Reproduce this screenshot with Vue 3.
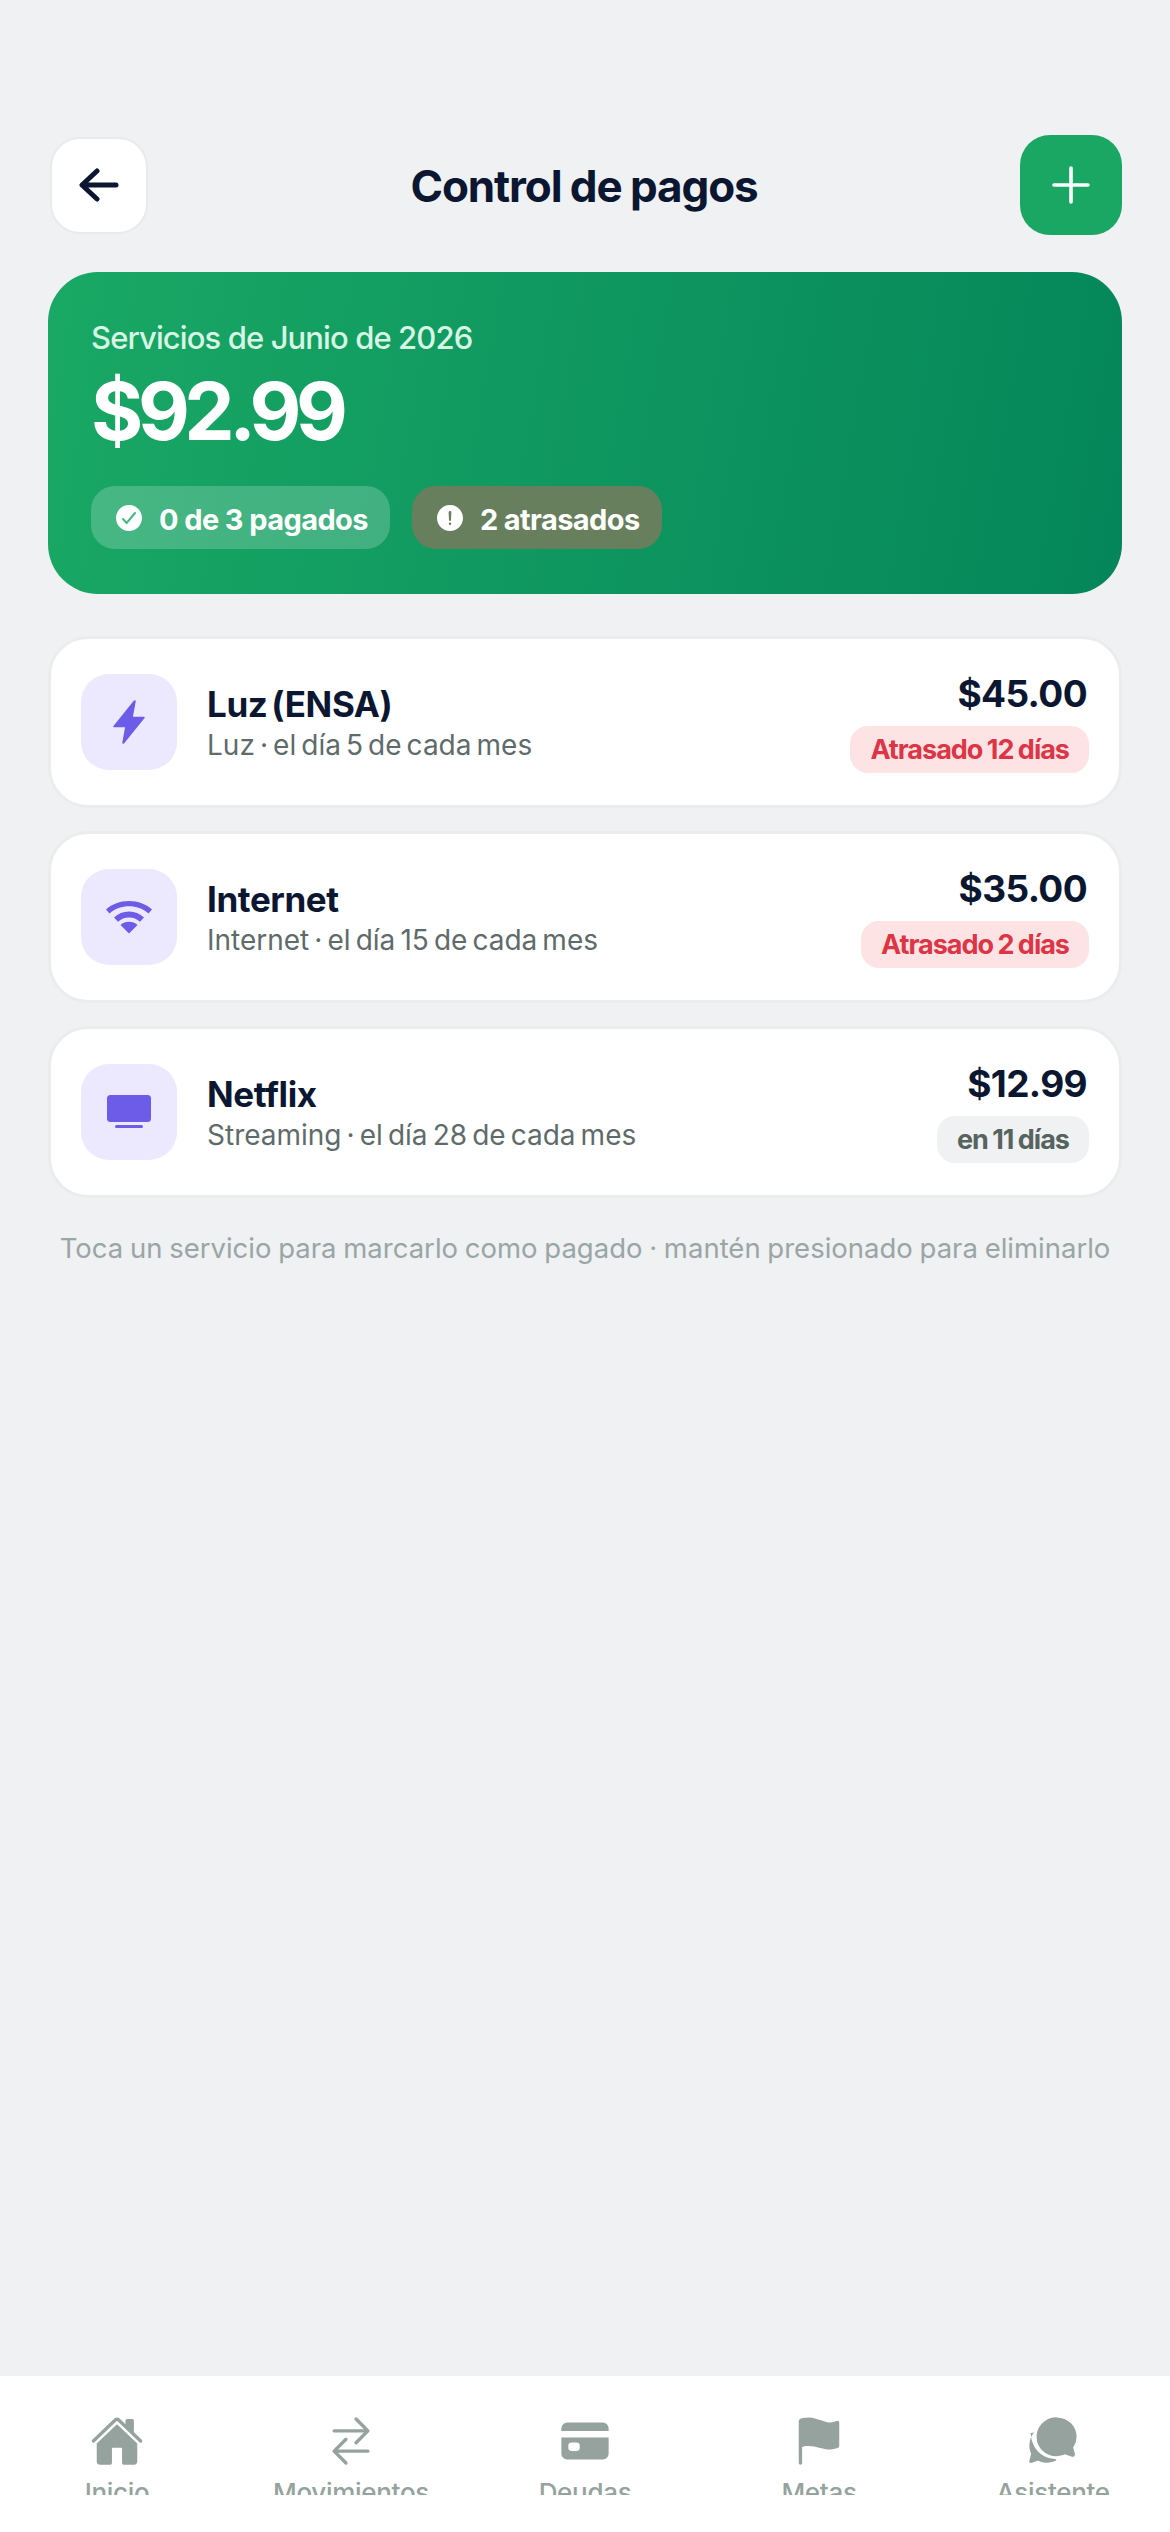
<template>
  <div class="page">
    <header class="top">
      <button class="back" type="button" aria-label="Volver">
        <svg width="40" height="34" viewBox="0 0 40 34" fill="none" stroke="#0b1730" stroke-width="5" stroke-linecap="round" stroke-linejoin="round"><path d="M18 3 3 17l15 14M4 17h33" /></svg>
      </button>
      <h1>Control de pagos</h1>
      <button class="add" type="button" aria-label="Agregar">
        <svg width="38" height="38" viewBox="0 0 38 38" fill="none" stroke="#fff" stroke-width="3.6" stroke-linecap="round"><path d="M19 2v34M2 19h34" /></svg>
      </button>
    </header>

    <section class="summary">
      <div class="summary-label">Servicios de Junio de 2026</div>
      <div class="summary-total">$92.99</div>
      <div class="chips">
        <div class="chip">
          <svg width="32" height="32" viewBox="0 0 512 512" fill="#fff"><path d="M256 48C141.31 48 48 141.31 48 256s93.31 208 208 208 208-93.31 208-208S370.69 48 256 48zm108.25 138.29l-134.4 160a16 16 0 01-12 5.71h-.27a16 16 0 01-11.89-5.3l-57.6-64a16 16 0 1123.78-21.4l45.29 50.32 122.59-145.91a16 16 0 0124.5 20.58z" /></svg>
          <span>0 de 3 pagados</span>
        </div>
        <div class="chip late">
          <svg width="32" height="32" viewBox="0 0 512 512" fill="#fff"><path d="M256 48C141.31 48 48 141.31 48 256s93.31 208 208 208 208-93.31 208-208S370.69 48 256 48zm0 319.91a20 20 0 1120-20 20 20 0 01-20 20zm21.72-201.15l-5.74 122a16 16 0 01-32 0l-5.74-121.94v-.05a21.74 21.74 0 1143.44 0z" /></svg>
          <span>2 atrasados</span>
        </div>
      </div>
    </section>

    <ul class="services">
      <li v-for="s in services" :key="s.name" class="service">
        <div class="service-icon">
          <svg v-if="s.icon === 'flash'" width="48" height="48" viewBox="0 0 512 512" fill="#6c5ce7"><path d="M315.27 33L96 304h128l-31.51 173.23a2.36 2.36 0 002.33 2.77 2.36 2.36 0 001.89-.95L416 208H288l31.66-173.25A2.45 2.45 0 00317.22 32a2.42 2.42 0 00-1.95 1z" stroke="#6c5ce7" stroke-width="16" stroke-linejoin="round" /></svg>
          <svg v-else-if="s.icon === 'wifi'" width="48" height="36" viewBox="0 0 48 36" fill="#6c5ce7"><path d="M1 10.5C7 5 15 2 24 2s17 3 23 8.500l-3.500 4C38 9.500 31 7.200 24 7.200S10 9.500 4.500 14.500z" /><path d="M9 18.500c4-3.800 9.200-6 15-6s11 2.200 15 6l-4 4.300c-3-2.800-6.800-4.300-11-4.300s-8 1.500-11 4.300z" /><path d="M15.500 26c2.300-2 5.200-3.200 8.500-3.200s6.200 1.200 8.500 3.200L24 34.500z" /></svg>
          <svg v-else width="46" height="36" viewBox="0 0 46 36" fill="#6c5ce7"><rect x="1" y="1" width="44" height="27" rx="3.500" /><rect x="9" y="31" width="28" height="3" rx="1.500" /></svg>
        </div>
        <div class="service-info">
          <div class="service-name">{{ s.name }}</div>
          <div class="service-sub">{{ s.sub }}</div>
        </div>
        <div class="service-side">
          <div class="service-amount">{{ s.amount }}</div>
          <div class="status" :class="{ overdue: s.overdue }">{{ s.status }}</div>
        </div>
      </li>
    </ul>

    <p class="hint">Toca un servicio para marcarlo como pagado · mantén presionado para eliminarlo</p>

    <div class="spacer"></div>

    <nav class="tabs">
      <div v-for="t in tabs" :key="t.label" class="tab">
        <svg v-if="t.icon === 'home'" width="54" height="54" viewBox="0 0 512 512" fill="#95a29d"><path d="M261.56 101.28a8 8 0 00-11.06 0L66.4 277.15a8 8 0 00-2.47 5.79L63.9 448a32 32 0 0032 32H192a16 16 0 0016-16V328a8 8 0 018-8h80a8 8 0 018 8v136a16 16 0 0016 16h96.06a32 32 0 0032-32V282.94a8 8 0 00-2.470-5.790z" /><path d="M490.91 244.15l-74.8-71.56V64a16 16 0 00-16-16h-48a16 16 0 00-16 16v32l-57.92-55.38C272.77 35.14 264.71 32 256 32c-8.680 0-16.720 3.140-22.140 8.630l-212.700 203.500c-6.220 6-7 15.870-1.340 22.370A16 16 0 0043 267.560L250.500 69.280a8 8 0 0111.060 0l207.520 198.280a16 16 0 0022.590-.440c6.140-6.360 5.630-16.860-.760-22.970z" /></svg>
        <svg v-else-if="t.icon === 'swap'" width="54" height="54" viewBox="0 0 512 512" fill="none" stroke="#95a29d" stroke-width="32" stroke-linecap="round" stroke-linejoin="round"><path d="M304 48l112 112-112 112M398.870 160H96M208 464L96 352l112-112M114 352h302" /></svg>
        <svg v-else-if="t.icon === 'card'" width="54" height="54" viewBox="0 0 512 512" fill="#95a29d"><path d="M32 376a56 56 0 0056 56h336a56 56 0 0056-56V222H32zm66-76a30 30 0 0130-30h48a30 30 0 0130 30v20a30 30 0 01-30 30h-48a30 30 0 01-30-30zM424 80H88a56 56 0 00-56 56v26h448v-26a56 56 0 00-56-56z" /></svg>
        <svg v-else-if="t.icon === 'flag'" width="54" height="54" viewBox="0 0 512 512" fill="#95a29d"><path d="M80 480a16 16 0 01-16-16V68.130a24 24 0 0111.900-20.720C88 40.380 112.380 32 160 32c37.210 0 78.830 14.710 115.550 27.680C305.120 70.130 333.050 80 352 80a183.840 183.840 0 0071-14.500 18 18 0 0125 16.580v219.360a20 20 0 01-12 18.310c-8.710 3.810-40.510 16.250-84 16.250-24.140 0-54.380-7.140-86.390-14.710C229.630 312.790 192.430 304 160 304c-36.870 0-55.740 5.580-64 9.110V464a16 16 0 01-16 16z" /></svg>
        <svg v-else width="54" height="54" viewBox="0 0 512 512" fill="#95a29d"><path d="M439.900 405.600a26.770 26.770 0 01-9.590-2l-56.780-20.130-.42-.17a9.880 9.880 0 00-3.910-.76 10.320 10.320 0 00-3.620.66c-1.380.52-13.810 5.190-26.850 8.770-7.070 1.940-31.680 8.270-51.430 8.270-50.480 0-97.680-19.400-132.890-54.630A183.380 183.380 0 01100.300 215.100a175.900 175.900 0 014.060-37.580c8.790-40.620 32.070-77.570 65.550-104A194.760 194.760 0 01290.300 32c52.210 0 100.860 20 137 56.180 34.160 34.270 52.880 79.330 52.730 126.870a177.860 177.860 0 01-30.300 99.150l-.19.280-.74 1c-.17.23-.34.45-.5.68l-.15.27a21.630 21.630 0 00-1.080 2.090l15.740 55.940a26.420 26.420 0 011.120 7.110 24 24 0 01-24.030 24.030z" /><path d="M76 176c-26 32-44 74-44 122 0 26 5 50 14 72 2 5 2 10 1 14l-16 62c-3 12 8 22 20 18l56-20c5-2 10-1 14 1 24 11 50 17 79 17 30 0 58-7 82-20 8-5 5-14-4-15-124-6-222-96-232-232 0-7-5-13-12-13z" /></svg>
        <div class="tab-label"><span>{{ t.label }}</span></div>
      </div>
    </nav>
  </div>
</template>

<script setup>
const services = [
  { name: 'Luz (ENSA)', sub: 'Luz · el día 5 de cada mes', amount: '$45.00', status: 'Atrasado 12 días', overdue: true, icon: 'flash' },
  { name: 'Internet', sub: 'Internet · el día 15 de cada mes', amount: '$35.00', status: 'Atrasado 2 días', overdue: true, icon: 'wifi' },
  { name: 'Netflix', sub: 'Streaming · el día 28 de cada mes', amount: '$12.99', status: 'en 11 días', overdue: false, icon: 'tv' }
]

const tabs = [
  { label: 'Inicio', icon: 'home' },
  { label: 'Movimientos', icon: 'swap' },
  { label: 'Deudas', icon: 'card' },
  { label: 'Metas', icon: 'flag' },
  { label: 'Asistente', icon: 'chat' }
]
</script>

<style>
html, body {
  margin: 0;
  background: #eff1f3;
}
</style>

<style scoped>
.page {
  width: 1170px;
  height: 2532px;
  display: flex;
  flex-direction: column;
  background: #eff1f3;
  font-family: Inter, "Noto Sans", sans-serif;
  color: #0b1730;
  box-sizing: border-box;
  overflow: hidden;
}

.top {
  display: flex;
  align-items: center;
  justify-content: space-between;
  height: 100px;
  margin: 135px 48px 0 50px;
}

.top h1 {
  margin: 2px 0 0;
  font-size: 44px;
  font-weight: 700;
  letter-spacing: -1.1px;
  word-spacing: -1px;
}

button {
  display: flex;
  align-items: center;
  justify-content: center;
  padding: 0;
  border: none;
  cursor: pointer;
}

.back {
  width: 98px;
  height: 97px;
  background: #fff;
  border: 2px solid #e8eaec;
  border-radius: 30px;
  box-sizing: border-box;
}

.add {
  width: 102px;
  height: 100px;
  background: #1aa764;
  border-radius: 30px;
}

.summary {
  margin: 37px 48px 0;
  height: 322px;
  padding: 46px 43px 0;
  box-sizing: border-box;
  border-radius: 50px;
  background: linear-gradient(100deg, #1aa865, #04865a);
}

.summary-label {
  font-size: 31px;
  line-height: 40px;
  font-weight: 500;
  letter-spacing: -0.9px;
  color: #d6f5e4;
}

.summary-total {
  margin-top: 5px;
  font-size: 80px;
  line-height: 96px;
  font-weight: 700;
  letter-spacing: -5.5px;
  color: #fff;
}

.chips {
  display: flex;
  gap: 22px;
  margin-top: 27px;
}

.chip {
  display: flex;
  align-items: center;
  gap: 14px;
  height: 63px;
  padding: 0 22px;
  border-radius: 24px;
  background: rgba(255, 255, 255, 0.2);
  color: #fff;
  font-size: 29px;
  font-weight: 700;
  letter-spacing: -0.6px;
}

.chip span {
  padding-top: 3px;
}

.chip.late {
  background: #677f5d;
}

.services {
  list-style: none;
  margin: 42px 48px 0;
  padding: 0;
  display: flex;
  flex-direction: column;
  gap: 23px;
}

.service {
  display: flex;
  align-items: center;
  height: 172px;
  padding: 0 30px;
  box-sizing: border-box;
  background: #fff;
  border: 3px solid #eaeced;
  border-radius: 40px;
}

.service-icon {
  width: 96px;
  height: 96px;
  flex: none;
  display: flex;
  align-items: center;
  justify-content: center;
  border-radius: 28px;
  background: #ece8fd;
}

.service-info {
  flex: 1;
  margin-left: 30px;
  padding-top: 3px;
}

.service-name {
  font-size: 35px;
  line-height: 44px;
  font-weight: 700;
  letter-spacing: -0.4px;
  word-spacing: -4px;
}

.service-sub {
  font-size: 28px;
  line-height: 39px;
  word-spacing: -2.8px;
  color: #5f6b6b;
}

.service-side {
  display: flex;
  flex-direction: column;
  align-items: flex-end;
  gap: 10px;
}

.service-amount {
  margin-right: 2px;
  font-size: 37px;
  line-height: 44px;
  font-weight: 700;
  letter-spacing: -0.6px;
}

.status {
  height: 47px;
  padding: 0 20px;
  display: flex;
  align-items: center;
  border-radius: 18px;
  background: #eff1f2;
  color: #56635f;
  font-size: 27px;
  font-weight: 700;
  letter-spacing: -1px;
  word-spacing: -1px;
}

.status.overdue {
  background: #fde3e4;
  color: #dc3545;
}

.hint {
  margin: 30px 0 0;
  text-align: center;
  font-size: 27.5px;
  line-height: 40px;
  word-spacing: -1px;
  color: #9aa5a5;
}

.spacer {
  flex: 1;
}

.tabs {
  height: 156px;
  flex: none;
  display: grid;
  grid-template-columns: repeat(5, 1fr);
  padding-top: 38px;
  box-sizing: border-box;
  background: #fff;
}

.tab {
  display: flex;
  flex-direction: column;
  align-items: center;
}

.tab-label {
  height: 19px;
  margin-top: 8px;
  overflow: hidden;
  font-size: 26px;
  line-height: 34px;
  font-weight: 500;
  letter-spacing: -0.3px;
  color: #95a29d;
  white-space: nowrap;
}
</style>
